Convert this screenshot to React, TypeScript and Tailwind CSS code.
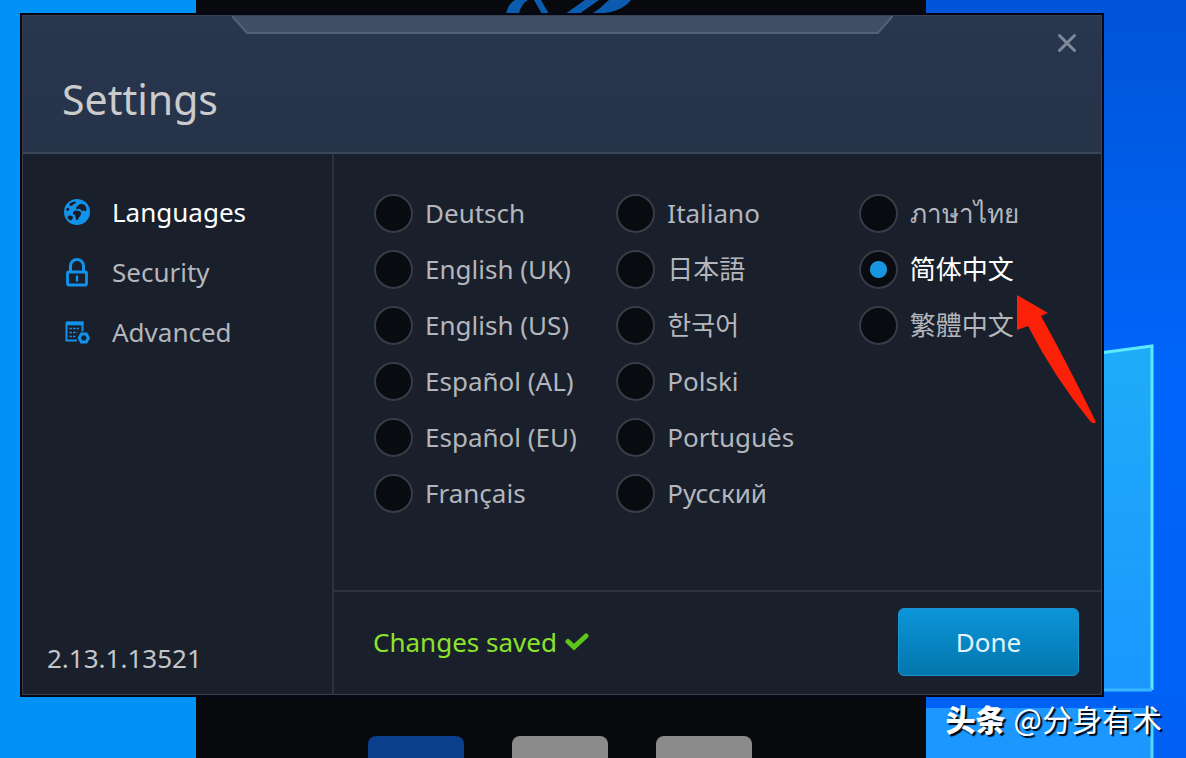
import React, { useState } from 'react';

interface NavItem {
  id: string;
  label: string;
  icon: React.ReactNode;
}

const GlobeIcon = () => (
  <svg viewBox="0 0 26 26" className="w-[26px] h-[26px]" aria-hidden="true">
    <circle cx="13" cy="13" r="13" fill="#1292ea" />
    <g fill="#171d29">
      <path d="M5.500 4.500 8.500 3l3-.4.4 1.600-2.400 1-1.500 1.600-2.300.2Z" />
      <path d="M2 10 4 8.600l1.600 1.600L4.200 12 2.600 11.600Z" />
      <path d="M3.600 17.500 6.500 16.200l2.600 1.600-.8 2.800-1.400 1L4 20Z" />
      <path d="M9 13.500 11 11.600l3 .2 2.400 1 1 1.200-1.200 3-1.400 1.600-.6 2-1.800.6-1-3.200-.4-2.200-2-.6Z" />
      <path d="M12 8.600 14.500 6l3-1.200 3 1 1.800 2.600.2 2.800-1.500 1-2-1-.4 1.200-2.400-2.200-2.200-.4-1.600.4Z" />
    </g>
  </svg>
);

const LockIcon = () => (
  <svg viewBox="0 0 26 30" className="w-[26px] h-[30px]" fill="none" stroke="#1292ea" aria-hidden="true">
    <path d="M6.500 14V9a6.500 6.500 0 0 1 13 0v5" strokeWidth="3" />
    <rect x="3.500" y="15" width="19" height="13" rx="1" strokeWidth="2.800" />
    <path d="M13 18.500v6" strokeWidth="2.400" />
  </svg>
);

const AdvancedIcon = () => (
  <svg viewBox="0 0 26 26" className="w-[26px] h-[26px]" fill="none" stroke="#1292ea" aria-hidden="true">
    <path d="M2.500 3.500h16v9M2.500 3.500v18H13" strokeWidth="2" />
    <path d="M2 4.500H19.500" strokeWidth="3.600" />
    <path d="M5.500 9.500h10M5.500 13.500h8M5.500 17.500h6" strokeWidth="1.600" strokeDasharray="2.400 1.200" />
    <path d="M17.400 15h4.800l2.200 4-2.200 4h-4.800l-2.200-4Z" strokeWidth="3" />
  </svg>
);

const navItems: NavItem[] = [
  { id: 'languages', label: 'Languages', icon: <GlobeIcon /> },
  { id: 'security', label: 'Security', icon: <LockIcon /> },
  { id: 'advanced', label: 'Advanced', icon: <AdvancedIcon /> },
];

const languages = [
  { code: 'de', label: 'Deutsch' },
  { code: 'en-GB', label: 'English (UK)' },
  { code: 'en-US', label: 'English (US)' },
  { code: 'es-MX', label: 'Español (AL)' },
  { code: 'es-ES', label: 'Español (EU)' },
  { code: 'fr', label: 'Français' },
  { code: 'it', label: 'Italiano' },
  { code: 'ja', label: '日本語' },
  { code: 'ko', label: '한국어' },
  { code: 'pl', label: 'Polski' },
  { code: 'pt', label: 'Português' },
  { code: 'ru', label: 'Русский' },
  { code: 'th', label: 'ภาษาไทย' },
  { code: 'zh-CN', label: '简体中文' },
  { code: 'zh-TW', label: '繁體中文' },
];

const Wallpaper = () => (
  <svg
    viewBox="0 0 1186 758"
    preserveAspectRatio="none"
    className="absolute inset-0 w-full h-full"
    aria-hidden="true"
  >
    <defs>
      <linearGradient id="sky" x1="0" y1="0" x2="0" y2="1">
        <stop offset="0" stopColor="#0054d8" />
        <stop offset="0.5" stopColor="#0066fb" />
        <stop offset="1" stopColor="#0060f4" />
      </linearGradient>
      <linearGradient id="pane" x1="0" y1="0" x2="0" y2="1">
        <stop offset="0" stopColor="#1eacf8" />
        <stop offset="1" stopColor="#1b97ff" />
      </linearGradient>
    </defs>
    <rect width="1186" height="758" fill="url(#sky)" />
    <rect width="300" height="758" fill="#0092f6" />
    <path d="M900 372 1152 346V690H900Z" fill="url(#pane)" />
    <path d="M1100 353 1152 346V690" fill="none" stroke="#5ce9fd" strokeWidth="3" />
    <path d="M900 690H1152" stroke="#35b8ff" strokeWidth="3" />
    <path d="M900 708H1152V758H900Z" fill="#1b97ff" />
    <path d="M1152 708V758" stroke="#4fdcff" strokeWidth="3" />
  </svg>
);

const Launcher = () => (
  <div className="absolute inset-y-0 left-[196px] right-[260px] bg-[#08090c] flex flex-col justify-between">
    <svg viewBox="0 0 130 14" className="w-[130px] h-[14px] ml-[307px]" fill="#0b5cae" aria-hidden="true">
      <path d="M3 14C4 8 7 3 12 0h13c-5 3-8 8-9 14ZM31 0h7l8 14h-7ZM62 14 82 0h14L76 14ZM88 14c8-4 12-9 18-14h22c-7 9-20 14-40 14Z" />
    </svg>
    <div className="flex gap-12 pl-[172px]">
      <div className="w-24 h-[22px] rounded-t-lg bg-[#093f8c]" />
      <div className="w-24 h-[22px] rounded-t-lg bg-[#8b8b8b]" />
      <div className="w-24 h-[22px] rounded-t-lg bg-[#8b8b8b]" />
    </div>
  </div>
);

const App: React.FC = () => {
  const [section, setSection] = useState('languages');
  const [language, setLanguage] = useState('zh-CN');

  return (
    <div className="relative min-h-screen overflow-hidden pt-[13px] pl-5 pr-[82px] pb-[60px] font-['Noto_Sans','Noto_Sans_CJK_SC',sans-serif] text-[26px] leading-9 text-[#b3b6bc]">
      <Wallpaper />
      <Launcher />

      <section className="relative border-2 border-[#020616] bg-[#191f2b]" aria-labelledby="title">
        <div className="border border-[#3c424d]">
          {/* Header */}
          <header className="relative flex items-start justify-between h-[138px] pl-[39px] pr-6 pt-[17px] border-b-2 border-[#3a4659] bg-linear-to-b from-[#28364e] to-[#263349]">
            <svg
              viewBox="0 0 660 18"
              preserveAspectRatio="none"
              className="absolute top-0 left-[19.4%] w-[61.3%] h-[18px]"
              aria-hidden="true"
            >
              <path d="M0 0 15 17H645L660 0Z" fill="#404d65" />
              <path d="M0 0 15 17H645L660 0" fill="none" stroke="#546179" strokeWidth="2" />
            </svg>
            <h1 id="title" className="pt-[42px] text-[41px] leading-[48px] text-[#cbcbcb]">Settings</h1>
            <button type="button" aria-label="Close" className="cursor-pointer">
              <svg viewBox="0 0 20 20" className="w-5 h-5" stroke="#7f8999" strokeWidth="3" strokeLinecap="round">
                <path d="M2.500 2.500 17.500 17.500M17.500 2.500 2.500 17.500" />
              </svg>
            </button>
          </header>

          <div className="flex">
            {/* Sidebar */}
            <div className="w-[311px] shrink-0 flex flex-col justify-between border-r-2 border-[#2c323f] pt-7 pb-[18px]">
              <nav className="flex flex-col">
                {navItems.map((item) => (
                  <button
                    key={item.id}
                    type="button"
                    onClick={() => setSection(item.id)}
                    className={`flex items-center gap-[22px] h-[60px] pl-[41px] text-left cursor-pointer ${
                      section === item.id ? 'text-white' : ''
                    }`}
                  >
                    {item.icon}
                    {item.label}
                  </button>
                ))}
              </nav>
              <p className="pl-6 text-[#c4c6ca]">2.13.1.13521</p>
            </div>

            {/* Language list */}
            <div className="flex-1 min-w-0">
              <div
                role="radiogroup"
                aria-label="Languages"
                className="grid grid-cols-3 grid-rows-6 grid-flow-col pl-10 pt-[31px] pb-[69px]"
              >
                {languages.map((lang) => (
                  <label
                    key={lang.code}
                    lang={lang.code}
                    className="flex items-center gap-3 h-14 whitespace-nowrap cursor-pointer has-checked:text-white"
                  >
                    <input
                      type="radio"
                      name="language"
                      value={lang.code}
                      checked={language === lang.code}
                      onChange={() => setLanguage(lang.code)}
                      className="appearance-none shrink-0 w-[39px] h-[39px] rounded-full border-2 border-[#373c47] bg-[#080b10] checked:bg-[radial-gradient(circle,#1795e0_8px,#080b10_9px)]"
                    />
                    {lang.label}
                  </label>
                ))}
              </div>

              <footer className="flex items-center justify-between h-[104px] pl-[39px] pr-[22px] pb-[2px] border-t-2 border-[#2c323f]">
                <p role="status" className="flex items-center gap-2 text-[#8ce32b]">
                  Changes saved
                  <svg viewBox="0 0 24 18" className="w-6 h-[18px]" fill="none" aria-hidden="true">
                    <path d="M3 8.500 9 14 21 3" stroke="#5cc41a" strokeWidth="5" strokeLinecap="round" />
                  </svg>
                </p>
                <button
                  type="button"
                  className="w-[181px] h-[68px] rounded-md border border-[#1a93cf] bg-linear-to-b from-[#0c95d9] to-[#0476ad] text-[#e2f5ff] cursor-pointer"
                >
                  Done
                </button>
              </footer>
            </div>
          </div>
        </div>
      </section>

      {/* Pointer to the chosen language */}
      <svg viewBox="0 0 80 130" className="absolute left-[1016px] top-[295px] w-20 h-[130px]" aria-hidden="true">
        <path d="M1 0 32 18 25 21 Q50 66 80 127 Q78 130 74 126 Q38 82 12 31L1 35Z" fill="#fb2008" />
      </svg>

      {/* Watermark */}
      <p className="absolute right-6 bottom-5 flex items-center gap-2 text-[30px] leading-10 text-white font-['Noto_Sans_CJK_SC',sans-serif] [text-shadow:2px_2px_1px_#00040c]">
        <b className="font-black">头条</b>
        <span>@分身有术</span>
      </p>
    </div>
  );
};

export default App;
